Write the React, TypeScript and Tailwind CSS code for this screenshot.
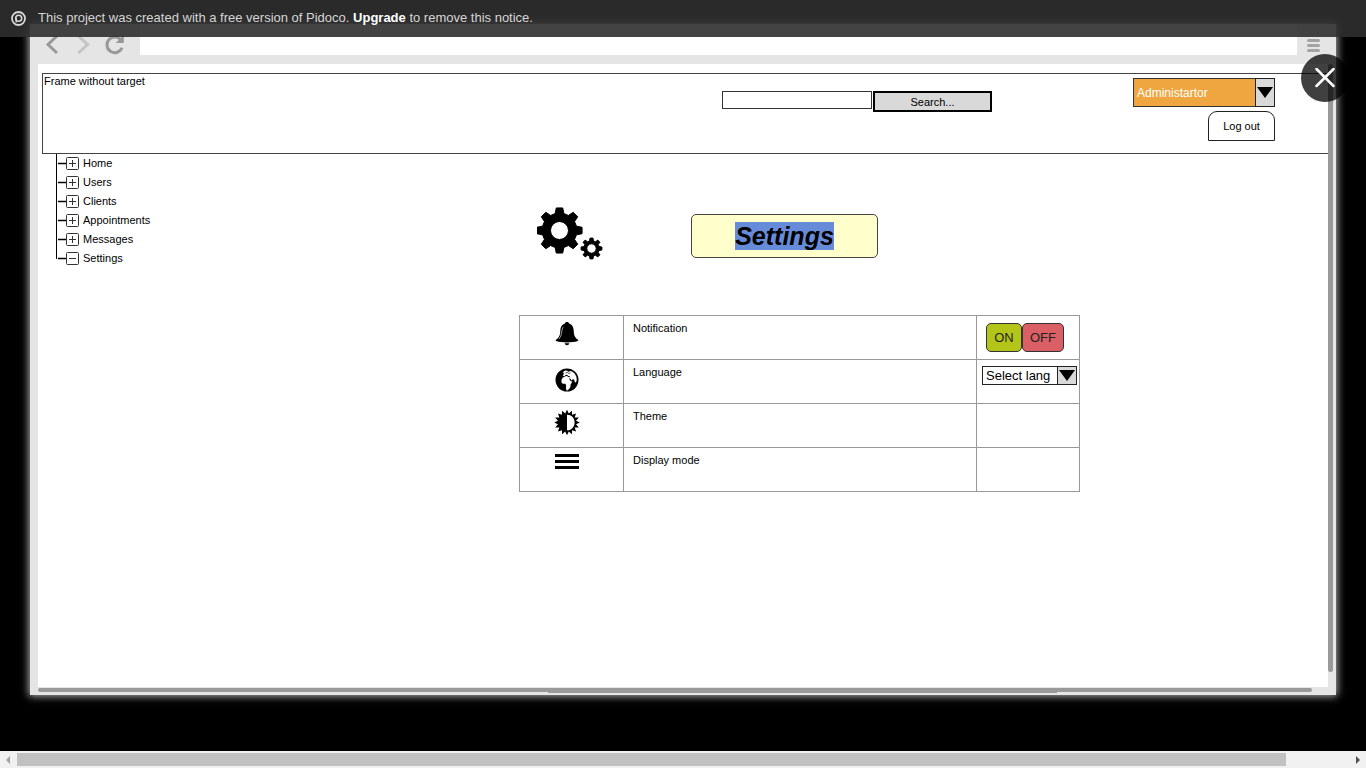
import React from "react";

function gearPath(cx: number, cy: number, outer: number, inner: number, hole: number, teeth: number) {
  const step = (Math.PI * 2) / teeth;
  const pts: string[] = [];
  for (let i = 0; i < teeth; i++) {
    const a = i * step;
    const corners: [number, number][] = [
      [inner, -0.32],
      [outer, -0.18],
      [outer, 0.18],
      [inner, 0.32],
    ];
    corners.forEach(([r, o]) => {
      const t = a + o * step;
      pts.push(`${(cx + r * Math.cos(t)).toFixed(2)} ${(cy + r * Math.sin(t)).toFixed(2)}`);
    });
  }
  return `M${pts.join("L")}Z M${cx - hole} ${cy}a${hole} ${hole} 0 1 0 ${hole * 2} 0a${hole} ${hole} 0 1 0 ${-hole * 2} 0Z`;
}

function starPath(cx: number, cy: number, outer: number, inner: number, points: number) {
  const pts: string[] = [];
  for (let i = 0; i < points * 2; i++) {
    const r = i % 2 ? inner : outer;
    const t = (i * Math.PI) / points;
    pts.push(`${(cx + r * Math.sin(t)).toFixed(2)} ${(cy - r * Math.cos(t)).toFixed(2)}`);
  }
  return `M${pts.join("L")}Z`;
}

const GearsIcon = () => (
  <svg width="66" height="56" viewBox="0 0 66 56" aria-hidden="true" className="shrink-0">
    <g fillRule="evenodd" stroke="#000" strokeWidth="1" strokeLinejoin="round">
      <path d={gearPath(22.5, 24.5, 22.8, 17.5, 9, 8)} />
      <path d={gearPath(54.5, 42.5, 10.5, 7.8, 4.7, 8)} />
    </g>
  </svg>
);

const BellIcon = () => (
  <svg width="24" height="24" viewBox="0 0 24 24" aria-hidden="true">
    <path d="M12 0c1.300 0 2 .7 2.100 1.600 3 1 4.400 3.500 4.600 6.900.2 4.600 1 7.200 4.300 9.200.7.500.5 1.100-.3 1.400C20 20.200 16 20.500 12 20.500s-8-.3-10.700-1.400c-.8-.3-1-.9-.3-1.400 3.300-2 4.100-4.600 4.300-9.200.2-3.400 1.600-5.900 4.600-6.900C10 .7 10.700 0 12 0Z" />
    <path d="M9.600 21.300h4.800c-.4 1.300-1.200 1.900-2.400 1.900s-2-.6-2.400-1.900Z" />
    <path d="M8 5C6.200 8.500 7.200 13.500 4 17" fill="none" stroke="#fff" strokeWidth=".6" />
  </svg>
);

const GlobeIcon = () => (
  <svg width="24" height="26" viewBox="0 -2 24 26" aria-hidden="true">
    <circle cx="12" cy="12" r="11.500" />
    <path
      fill="#fff"
      d="M8.200 4 10 2.600l2.200.2 1.300 1 1.800-.9 2.300.9 2.200 2 1.600 3 .4 3.400-1 2.300-.9-.2-.8-2.600-1-.8-1.400 1.600-1.500-2-1-.2.700 2 1 1 1.500.1-1.800 3-.2 2.500-1.200 1.800-1.300 1.600-1.300.2-.7-2.400.3-2.400-.8-1.900-2.700-.1-1.300-1.500.2-2.600 1.300-2L9.400 8.700l1.600-.7 1.600.2.400.9 1.900.2.300-.9-2-.4-1.100-1.300-1.600.3-.6 1-1.800.1.100-1.700 1.200-.5-1.200-1Z"
    />
    <path stroke="#000" strokeWidth=".7" fill="none" d="m10.500 5 1.800-.6 1.400 1 1.800-.6" />
  </svg>
);

const ThemeIcon = () => (
  <svg width="26" height="26" viewBox="0 0 26 26" aria-hidden="true">
    <path d={starPath(13, 12.5, 12.8, 9.2, 16)} />
    <path fill="#fff" d="M13 4.700c4.500 0 7.600 3.500 7.600 7.800s-3.100 7.800-7.600 7.800Z" />
  </svg>
);

const BarsIcon = () => (
  <svg width="24" height="15" viewBox="0 0 24 15" aria-hidden="true">
    <path d="M0 0h24v3H0zM0 6h24v3H0zM0 12h24v3H0z" />
  </svg>
);

const Notice = () => (
  <div className="absolute inset-x-0 top-0 z-20 flex h-[37px] items-center gap-3 bg-[#2f2f2f]/90 pl-[11px] text-[13px] leading-4 text-[#d6d6d6]">
    <svg width="15" height="15" viewBox="0 0 15 15" aria-hidden="true" fill="none" stroke="#d6d6d6">
      <circle cx="7.500" cy="7.500" r="6.500" strokeWidth="1.800" />
      <circle cx="7.700" cy="7.200" r="3" strokeWidth="1.600" />
      <path d="M5.200 7v4.500" strokeWidth="1.400" />
    </svg>
    <p className="pb-px">
      This project was created with a free version of Pidoco.{" "}
      <a href="#upgrade" className="font-bold text-white">Upgrade</a> to remove this notice.
    </p>
  </div>
);

const BrowserBar = () => (
  <div className="flex h-10 shrink-0 items-start">
    <div className="flex w-[110px] items-center gap-2 pl-3 pt-2">
      <button aria-label="Back">
        <svg width="20" height="24" viewBox="0 0 20 24" fill="none" stroke="#999" strokeWidth="3">
          <path d="m15 4-9 8.500 9 8.500" />
        </svg>
      </button>
      <button aria-label="Forward">
        <svg width="20" height="24" viewBox="0 0 20 24" fill="none" stroke="#c4c4c4" strokeWidth="3">
          <path d="m8.500 4 9 8.500-9 8.500" />
        </svg>
      </button>
      <button aria-label="Reload" className="pl-1">
        <svg width="24" height="24" viewBox="0 0 24 24">
          <path d="M20 15.800A7.800 7.800 0 1 1 18.500 7.500" fill="none" stroke="#999" strokeWidth="3" />
          <path d="M21.800 2.500v8.500h-8Z" fill="#999" />
        </svg>
      </button>
    </div>
    <input aria-label="Address" className="h-[31px] min-w-0 flex-1 bg-white px-2 text-xs outline-none" />
    <button aria-label="Menu" className="flex w-[39px] flex-col gap-0.5 pl-[10px] pt-[15px]">
      <span className="h-[3px] w-[13px] rounded-full bg-[#a3a3a3]" />
      <span className="h-[3px] w-[13px] rounded-full bg-[#a3a3a3]" />
      <span className="h-[3px] w-[13px] rounded-full bg-[#a3a3a3]" />
    </button>
  </div>
);

const Arrow = () => (
  <span className="pointer-events-none absolute inset-y-0 right-0 flex w-5 items-center justify-center border border-[#222] bg-[#d9d9d9]">
    <svg width="16" height="11" viewBox="0 0 16 11" aria-hidden="true">
      <path d="M0 0h16L8 11Z" />
    </svg>
  </span>
);

const Header = () => (
  <header className="flex h-[81px] items-start border border-r-0 border-[#444] pr-[53px]">
    <p className="pl-px text-[11px] leading-[15px]">Frame without target</p>
    <form className="ml-auto mr-[141px] mt-[17px] flex items-start gap-px" onSubmit={(e) => e.preventDefault()}>
      <input aria-label="Search" className="h-[18px] w-[150px] border border-[#333] bg-white px-1 text-[11px] outline-none" />
      <button className="h-[21px] w-[119px] border-2 border-black bg-[#d9d9d9] text-[11px] leading-4">Search...</button>
    </form>
    <div className="flex flex-col items-end gap-1 pt-1">
      <div className="relative">
        <select aria-label="Role" className="h-[29px] w-[142px] appearance-none border border-[#333] bg-[#f0a640] pl-[3px] text-xs text-white">
          <option>Administartor</option>
        </select>
        <Arrow />
      </div>
      <button className="h-[30px] w-[67px] rounded-t-[9px] border border-[#222] text-[11px]">Log out</button>
    </div>
  </header>
);

const pages = ["Home", "Users", "Clients", "Appointments", "Messages", "Settings"];

const Tree = () => (
  <nav className="w-[477px] shrink-0 pl-[14px]">
    <ul>
      {pages.map((page) => {
        const open = page === "Settings";
        return (
          <li key={page} className="flex h-[19px] items-center">
            <span className={open ? "h-[10px] w-px self-start bg-black" : "h-full w-px bg-black"} />
            <svg width="22" height="13" viewBox="0 0 22 13" aria-hidden="true" fill="none" stroke="#333">
              <path d="M1 6.500h9" strokeWidth="1.500" stroke="#000" />
              <rect x="9.500" y=".5" width="12" height="12" rx="1" />
              <path d={open ? "M12 6.500h7" : "M12 6.500h7M15.500 3v7"} />
            </svg>
            <a href={`#${page.toLowerCase()}`} className="pl-1 text-[11px] leading-[15px]">{page}</a>
          </li>
        );
      })}
    </ul>
  </nav>
);

const Toggle = () => (
  <div className="flex pl-[9px] pt-px text-[13px] text-[#222]">
    <button className="h-[29px] w-[36px] rounded-[5px] border border-[#333] bg-[#b3c519]">ON</button>
    <button className="h-[29px] w-[42px] rounded-[5px] border border-[#333] bg-[#da6065]">OFF</button>
  </div>
);

const Language = () => (
  <div className="relative ml-[5px] w-[95px]">
    <select aria-label="Language" className="block h-[19px] w-full appearance-none border border-[#222] bg-white pl-[3px] text-[13px] leading-4">
      <option>Select lang</option>
    </select>
    <Arrow />
  </div>
);

const settings = [
  { label: "Notification", icon: <BellIcon />, control: <Toggle /> },
  { label: "Language", icon: <GlobeIcon />, control: <Language /> },
  { label: "Theme", icon: <ThemeIcon />, control: null },
  { label: "Display mode", icon: <BarsIcon />, control: null },
];

const SettingsPanel = () => (
  <main className="w-[561px] pt-[52px]">
    <div className="flex items-start pl-[18px]">
      <GearsIcon />
      <h1 className="ml-[88px] mt-2 flex h-11 w-[187px] items-center justify-center rounded-[5px] border border-[#444] bg-[#ffffcc] pb-px text-[25px] font-bold italic leading-7">
        <span className="bg-[#668cd9]">Settings</span>
      </h1>
    </div>
    <table className="mt-[53px] w-full table-fixed border-collapse text-[11px] leading-[15px]">
      <colgroup>
        <col className="w-[104px]" />
        <col />
        <col className="w-[103px]" />
      </colgroup>
      <tbody>
        {settings.map((row) => (
          <tr key={row.label} className="h-11 align-top">
            <td className="border border-[#999] pt-1.5">
              <div className="flex justify-center pr-2.5">{row.icon}</div>
            </td>
            <td className="border border-[#999] pl-[9px] pt-[5px]">{row.label}</td>
            <td className="border border-[#999] pt-1.5">{row.control}</td>
          </tr>
        ))}
      </tbody>
    </table>
  </main>
);

export default function App() {
  return (
    <div className="relative flex min-h-screen flex-col overflow-hidden bg-black font-['Liberation_Sans',Arial,sans-serif] text-black">
      <Notice />
      <div className="relative mx-[30px] mb-14 mt-6 flex flex-1 flex-col bg-[#e5e5e5] shadow-[0_0_8px_1px_#bbbbbb]">
        <BrowserBar />
        <div className="ml-2 mr-[3px] flex flex-1">
          <div className="flex-1 bg-white pl-1 pt-[9px]">
            <Header />
            <div className="flex">
              <Tree />
              <SettingsPanel />
            </div>
          </div>
          <div className="w-[5px] pb-[15px]">
            <div className="h-full rounded-full bg-[#999]" />
          </div>
        </div>
        <div className="ml-2 mr-6 h-2 pt-px">
          <div className="h-1 rounded-full bg-[#999]" />
          <div className="ml-[40%] h-px w-2/5 bg-[#999]" />
        </div>
        <button
          aria-label="Close"
          className="absolute -right-[13px] top-[30px] z-10 flex size-12 items-center justify-center rounded-full bg-black/75"
        >
          <svg width="20" height="20" viewBox="0 0 20 20" fill="none" stroke="#fff" strokeWidth="2.500" strokeLinecap="round">
            <path d="m1.500 1 17 17M18.500 1l-17 17" />
          </svg>
        </button>
      </div>
      <div className="flex h-[17px] items-center bg-[#f1f1f1]">
        <svg width="17" height="17" viewBox="0 0 17 17" aria-hidden="true">
          <path d="M10 5v8L6 9Z" fill="#a3a3a3" />
        </svg>
        <div className="mr-[63px] h-[13px] flex-1 bg-[#c1c1c1]" />
        <svg width="17" height="17" viewBox="0 0 17 17" aria-hidden="true">
          <path d="M7 5v8l4-4Z" fill="#505050" />
        </svg>
      </div>
    </div>
  );
}
